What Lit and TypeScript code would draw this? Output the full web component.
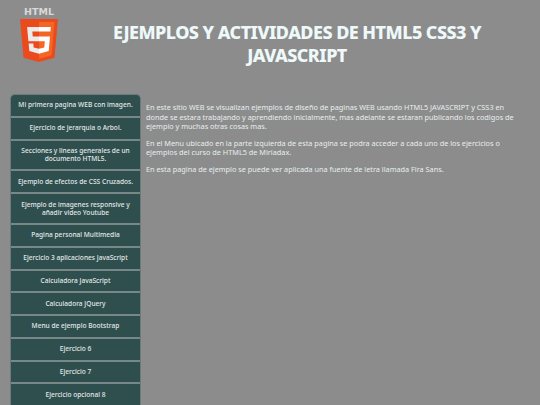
import { LitElement, html, css } from "lit";
import { customElement } from "lit/decorators.js";

const items = [
  "Mi primera pagina WEB con imagen.",
  "Ejercicio de jerarquia o Arbol.",
  "Secciones y lineas generales de un documento HTML5.",
  "Ejemplo de efectos de CSS Cruzados.",
  "Ejemplo de imagenes responsive y añadir video Youtube",
  "Pagina personal Multimedia",
  "Ejercicio 3 aplicaciones JavaScript",
  "Calculadora JavaScript",
  "Calculadora JQuery",
  "Menu de ejemplo Bootstrap",
  "Ejercicio 6",
  "Ejercicio 7",
  "Ejercicio opcional 8",
];

@customElement("app-root")
export class AppRoot extends LitElement {
  static styles = css`
    :host {
      display: block;
      width: 540px;
      height: 405px;
      overflow: hidden;
      background: #8c8c8c;
      font-family: "Noto Sans", sans-serif;
    }
    .header {
      display: flex;
      height: 94px;
      box-sizing: border-box;
    }
    .logo {
      flex: none;
      width: 38px;
      margin-left: 20px;
      padding-top: 7px;
    }
    .logo-label {
      font-family: "DejaVu Sans", sans-serif;
      font-weight: 700;
      font-size: 9.5px;
      line-height: 10px;
      height: 12px;
      text-align: center;
      color: #d8d8d8;
    }
    .logo svg { display: block; }
    h1 {
      flex: 1;
      margin: 0;
      padding: 21px 24px 0 20px;
      font-size: 18px;
      line-height: 23px;
      font-weight: 800;
      color: #eef9f9;
      text-align: center;
      letter-spacing: -0.55px;
    }
    .main { display: flex; }
    nav {
      flex: none;
      width: 131px;
      box-sizing: border-box;
      margin-left: 10px;
      border-radius: 5px 5px 0 0;
      background: #2f4f4f;
      overflow: hidden;
      border: 1px solid #6b7a7a;
      border-bottom: 0;
    }
    .item {
      padding: 6.3px 4px 6.25px;
      font-size: 6.6px;
      line-height: 8.2px;
      font-weight: 500;
      color: #e2e8e8;
      text-align: center;
      border-bottom: 2px solid #788888;
    }
    .content {
      flex: 1;
      padding: 9px 20px 0 5px;
      font-size: 7.3px;
      line-height: 9.6px;
      color: #e6eeee;
    }
    p { margin: 0 0 7px; }
  `;

  render() {
    return html`
      <div class="header">
        <div class="logo">
          <div class="logo-label">HTML</div>
          <svg width="38" height="43" viewBox="30 0 451 512">
            <path d="M71 460 30 0H481L440 460 255 512Z" fill="#ea4a1c" />
            <path d="M256 472 405 431 440 37H256Z" fill="#f46624" />
            <path d="M256 208H181L176 150H256V94H114L115 109 129 265H256ZM256 355H255L192 338 188 293H132L140 382 255 414H256Z" fill="#ebebeb" />
            <path d="M255 208V265H325L318 338 255 355V414L371 382 372 372 385 223 387 208H371ZM255 94V150H392L393 138 395 109 397 94Z" fill="#ffffff" />
          </svg>
        </div>
        <h1>EJEMPLOS Y ACTIVIDADES DE HTML5 CSS3 Y<br />JAVASCRIPT</h1>
      </div>
      <div class="main">
        <nav>${items.map((t) => html`<div class="item">${t}</div>`)}</nav>
        <div class="content">
          <p>En este sitio WEB se visualizan ejemplos de diseño de paginas WEB usando HTML5 JAVASCRIPT y CSS3 en donde se estara trabajando y aprendiendo inicialmente, mas adelante se estaran publicando los codigos de ejemplo y muchas otras cosas mas.</p>
          <p>En el Menu ubicado en la parte izquierda de esta pagina se podra acceder a cada uno de los ejercicios o ejemplos del curso de HTML5 de Miriadax.</p>
          <p>En esta pagina de ejemplo se puede ver aplicada una fuente de letra llamada Fira Sans.</p>
        </div>
      </div>
    `;
  }
}
